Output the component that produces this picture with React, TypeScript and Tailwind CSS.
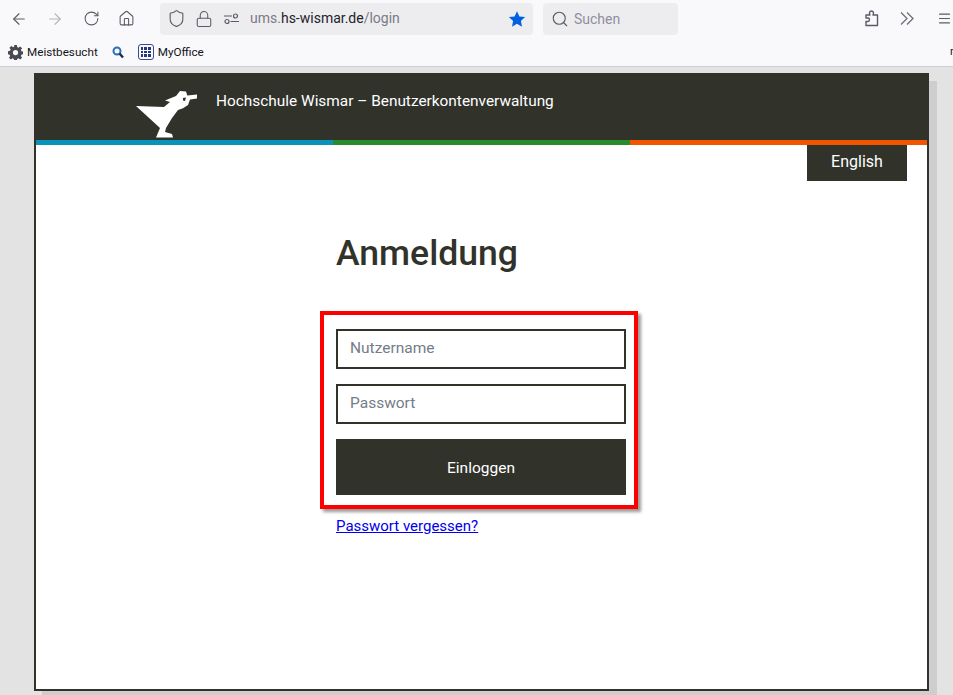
import { ArrowLeft, ArrowRight, RotateCw, House, Shield, Lock, Search, Menu } from "lucide-react";

function Logo() {
  return (
    <svg width="62" height="53" viewBox="0 0 62 53" className="absolute left-[100px] top-[10px]">
      <path
        fill="#fff"
        fillRule="evenodd"
        d="M0 21 L28 22 L34 17 L29 15.500 L40 11 L44 6 L50 6.500 L51.300 10.500 L61 9.500 L61 13.500 L54 14.500 L52 20 L47 23.300 L42 25 L36 33 L30 43 L29 47 L36 49 L37 52.500 L20 52.500 L24 43 Z M47 13 L50 12.500 L49 16 L47 15.500 Z"
      />
    </svg>
  );
}

function Puzzle() {
  return (
    <svg width="14" height="17" viewBox="0 0 14 17" fill="none" stroke="#5b5b66" strokeWidth="1.4" className="ml-[187px]">
      <path d="M1 15.500 V11.500 H3 C5 11.500 5 8 3 8 H1 V5 H5 C4 3 4.500 1 6.500 1 C8.500 1 9 3 8 5 H12.500 V15.500 Z" strokeLinejoin="round" />
    </svg>
  );
}

function Toolbar() {
  return (
    <div className="h-[37px] flex items-center text-[#5b5b66]">
      <div className="flex w-[160px] shrink-0 pl-[1px]">
        <div className="w-[36px] flex justify-center"><ArrowLeft size={18} strokeWidth={1.5} /></div>
        <div className="w-[36px] flex justify-center text-[#b4b4bb]"><ArrowRight size={18} strokeWidth={1.5} /></div>
        <div className="w-[36px] flex justify-center"><RotateCw size={17} strokeWidth={1.5} /></div>
        <div className="w-[34px] flex justify-center"><House size={17} strokeWidth={1.5} /></div>
      </div>
      <div className="w-[373px] h-[32px] bg-[#ededf0] rounded-[4px] flex items-center pl-[7px] pr-[7px]">
        <Shield size={19} strokeWidth={1.4} />
        <Lock size={18} strokeWidth={1.4} className="ml-[9px]" />
        <svg width="16" height="12" viewBox="0 0 16 12" className="ml-[11px]" fill="none" stroke="#5b5b66" strokeWidth="1.2">
          <circle cx="11.500" cy="3" r="2" />
          <circle cx="3" cy="8.500" r="2" />
          <path d="M0 3h8M6.500 8.500H15" />
        </svg>
        <span className="ml-[10px] text-[14px] text-[#7b7b85]">ums.<span className="text-[#23232b]">hs-wismar.de</span>/login</span>
        <svg width="18" height="18" viewBox="0 0 24 24" className="ml-auto" fill="#0060df">
          <path d="M12 1.500l3.200 7 7.600.9-5.600 5.200 1.500 7.600L12 18.400l-6.700 3.800 1.500-7.600L1.200 9.400l7.600-.9z" />
        </svg>
      </div>
      <div className="w-[135px] h-[32px] ml-[10px] bg-[#ededf0] rounded-[4px] flex items-center pl-[8px]">
        <Search size={18} strokeWidth={1.5} />
        <span className="ml-[5px] pt-[1px] text-[14px] text-[#8f8f9d]">Suchen</span>
      </div>
      <Puzzle />
      <svg width="14" height="13" viewBox="0 0 14 13" fill="none" stroke="#6f6f78" strokeWidth="1.3" className="ml-[21px]">
        <path d="M1 .5 L7 6.500 L1 12.500 M7 .5 L13 6.500 L7 12.500" />
      </svg>
      <Menu size={15} strokeWidth={1.7} className="ml-[23px]" />
    </div>
  );
}

function Bookmarks() {
  return (
    <div className="h-[29px] pt-[1px] flex items-center pl-[8px] text-[11.700px] text-[#15141a] relative">
      <svg width="15" height="15" viewBox="0 0 16 16" fill="#4a4a52">
        <path
          fillRule="evenodd"
          d="M6.600 0h2.800l.4 2.200 1.300.6 1.900-1.300 2 2-1.300 1.900.6 1.300 2.200.4v2.800l-2.200.4-.6 1.300 1.300 1.900-2 2-1.900-1.300-1.300.6-.4 2.200H6.600l-.4-2.200-1.300-.6L3 15.500l-2-2 1.300-1.900-.6-1.300L0 9.900V6.600l2.200-.4.6-1.300L1.500 3l2-2 1.900 1.300 1.300-.6zM8 5.200a2.800 2.800 0 1 0 0 5.600 2.800 2.800 0 0 0 0-5.600z"
        />
      </svg>
      <span className="ml-[4px] pt-[2px]">Meistbesucht</span>
      <svg width="12" height="13" viewBox="0 0 12 13" fill="none" className="ml-[14px]">
        <circle cx="5" cy="5" r="3.500" stroke="#2a6fb8" strokeWidth="2" />
        <path d="M7.500 7.500 L11 11.500" stroke="#1b2a55" strokeWidth="2.400" />
      </svg>
      <div className="ml-[14px] w-[16px] h-[16px] border border-[#3a4a8c] rounded-[3px] grid grid-cols-3 gap-[1px] p-[2px]">
        {Array.from({ length: 9 }).map((_, i) => (
          <div key={i} className="bg-[#27357a]" />
        ))}
      </div>
      <span className="ml-[4px] pt-[2px]">MyOffice</span>
      <span className="absolute right-0 top-[7px] text-[11px] w-[3px] overflow-hidden">r</span>
    </div>
  );
}

export default function App() {
  return (
    <div className="w-[953px] h-[695px] overflow-hidden bg-[#e3e3e3] font-['Roboto',sans-serif]">
      <div className="h-[67px] bg-[#f9f9fb] border-b border-[#cfcfd8]">
        <Toolbar />
        <Bookmarks />
      </div>

      <div className="ml-[34px] mt-[6px] w-[895px] h-[618px] border-2 border-[#31332b] bg-white shadow-[8px_8px_0_0_#cecece] text-[#31332b]">
        <div className="h-[65px] bg-[#31332b] relative">
          <Logo />
          <div className="pl-[180px] pt-[15px] text-[15.400px] text-white">Hochschule Wismar – Benutzerkontenverwaltung</div>
        </div>
        <div className="flex h-[5px]">
          <div className="flex-1 bg-[#0a93b8]" />
          <div className="flex-1 bg-[#2a8a2e]" />
          <div className="flex-1 bg-[#f25500]" />
        </div>
        <div className="flex justify-end pr-[20px]">
          <div className="w-[100px] h-[36px] pb-[2px] bg-[#31332b] text-white text-[16px] flex items-center justify-center">English</div>
        </div>

        <div className="ml-[300px] mt-[47px] text-[35.600px] leading-[50px] font-medium">Anmeldung</div>

        <div className="ml-[284px] mt-[33px] w-[318px] h-[198px] border-4 border-[#ff0000] shadow-[3px_3px_3px_#9a9a9a] pt-[14px] pl-[12px] pr-[8px]">
          <div className="h-[40px] border-2 border-[#31332b] flex items-center pl-[12px] text-[15.500px] text-[#757c88]">Nutzername</div>
          <div className="h-[40px] mt-[15px] border-2 border-[#31332b] flex items-center pl-[12px] text-[15.500px] text-[#757c88]">Passwort</div>
          <div className="h-[56px] pt-[4px] mt-[15px] bg-[#31332b] text-white text-[15.500px] flex items-center justify-center">Einloggen</div>
        </div>

        <a href="#" className="block ml-[300px] mt-[5px] text-[15px] leading-[24px] text-[#0000ee] underline">Passwort vergessen?</a>
      </div>
    </div>
  );
}
